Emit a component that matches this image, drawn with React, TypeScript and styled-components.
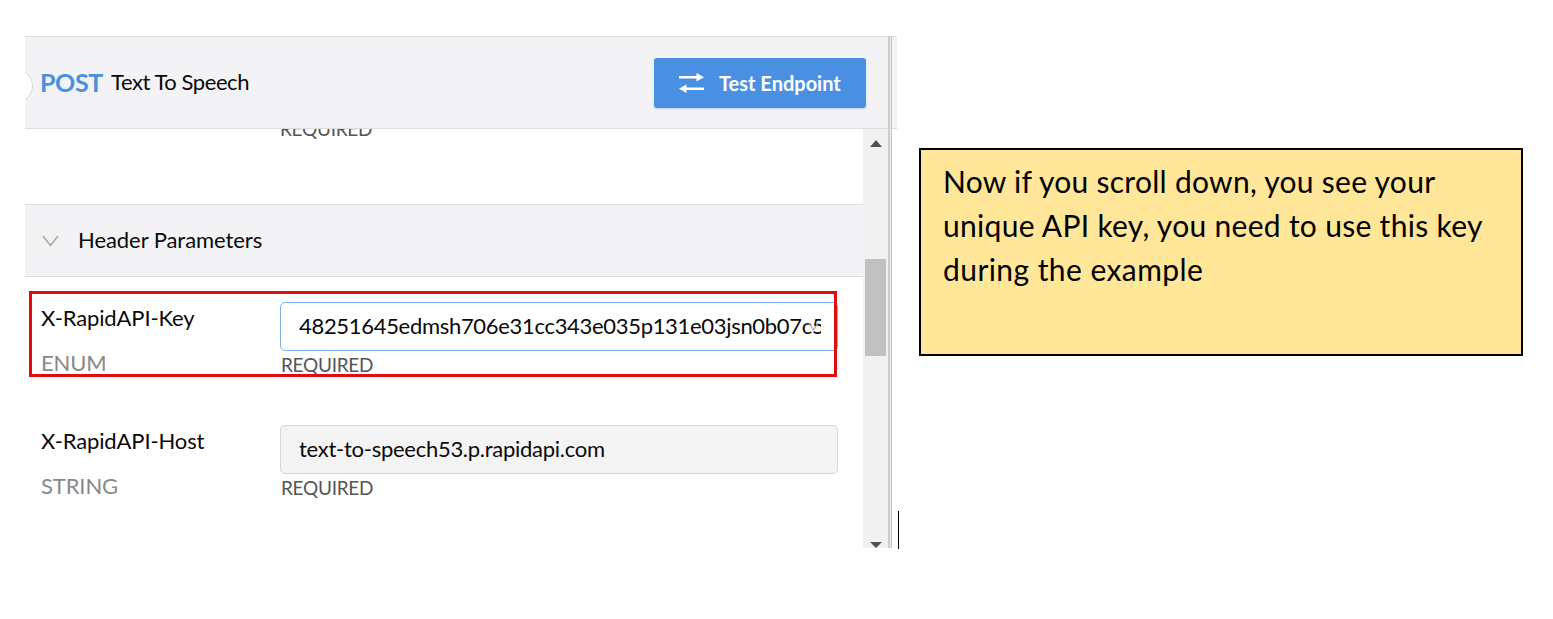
import React from "react";
import styled, { createGlobalStyle } from "styled-components";

const GlobalStyle = createGlobalStyle`
  * { box-sizing: border-box; }
  body { margin: 0; background: #fff; font-family: Lato, "Liberation Sans", sans-serif; color: #0a0a0a; }
`;

const Page = styled.main`
  display: flex;
  align-items: flex-start;
  width: 1553px;
  height: 619px;
  padding: 36px 0 0 25px;
  overflow: hidden;
`;

const Panel = styled.section`
  display: flex;
  flex-direction: column;
  width: 863px;
  height: 512px;
`;

const Header = styled.header`
  display: flex;
  align-items: center;
  height: 93px;
  flex: none;
  padding-right: 22px;
  background: #f3f3f5;
  border-top: 1px solid #dcdddf;
  border-bottom: 1px solid #dcdddf;
`;

const HandleClip = styled.div`
  width: 15px;
  height: 40px;
  margin-top: 7px;
  overflow: hidden;
`;

const Handle = styled.div`
  width: 34px;
  height: 34px;
  margin: 3px 0 0 -26px;
  border: 1px solid #d8d8da;
  border-radius: 50%;
  background: #fff;
`;

const Method = styled.span`
  width: 71px;
  padding-bottom: 2px;
  font-size: 25px;
  font-weight: 700;
  line-height: 30px;
  letter-spacing: -0.4px;
  color: #4a90e2;
`;

const Title = styled.h1`
  flex: 1;
  margin: 0;
  padding-bottom: 2px;
  font-size: 22px;
  font-weight: 400;
  line-height: 30px;
  letter-spacing: -0.43px;
`;

const TestButton = styled.button`
  display: flex;
  align-items: center;
  width: 212px;
  height: 50px;
  padding: 0 0 0 24px;
  gap: 14px;
  border: 0;
  border-radius: 3px;
  background: #4a90e2;
  box-shadow: 0 1px 2px rgba(74, 144, 226, 0.35);
  color: #fff;
  font: 700 20px Lato, sans-serif;
  white-space: nowrap;
`;

const Body = styled.div`
  display: flex;
  flex: 1;
  min-height: 0;
`;

const Content = styled.div`
  position: relative;
  width: 838px;
  overflow: hidden;
`;

const Hint = styled.div`
  padding-left: 1px;
  font-size: 19px;
  line-height: 28px;
  letter-spacing: -0.28px;
  color: #555;
`;

const PreviousParam = styled.div`
  height: 75px;
  padding-left: 254px;
  overflow: hidden;

  ${Hint} {
    margin-top: -14px;
  }
`;

const SectionBar = styled.div`
  display: flex;
  align-items: center;
  height: 73px;
  padding: 0 0 3px 17px;
  gap: 20px;
  background: #f3f3f5;
  border-top: 1px solid #dcdddf;
  border-bottom: 1px solid #dcdddf;
  font-size: 22px;
  letter-spacing: -0.06px;
`;

const SectionChevron = styled.svg`
  margin: 3px -1px 0 0;
`;

const Param = styled.div`
  display: flex;
  height: 123px;
  padding: 25px 0 0 16px;
`;

const Labels = styled.div`
  width: 239px;
`;

const Name = styled.div`
  margin-top: -1px;
  font-size: 22px;
  line-height: 34px;
  letter-spacing: -0.12px;
`;

const Kind = styled.div`
  margin-top: 11px;
  font-size: 22px;
  line-height: 34px;
  letter-spacing: -0.12px;
  color: #888;
`;

const Field = styled.div<{ $active?: boolean }>`
  display: flex;
  align-items: center;
  width: 558px;
  height: 49px;
  padding: 0 16px 2px 18px;
  border: 1px solid ${(p) => (p.$active ? "#7fb0e8" : "#d6d6d6")};
  border-radius: 5px;
  background: ${(p) => (p.$active ? "#fff" : "#f4f4f4")};
  font-size: 22px;
  letter-spacing: ${(p) => (p.$active ? "-0.31px" : "-0.27px")};
`;

const Value = styled.div`
  flex: 1;
  overflow: hidden;
  white-space: nowrap;
`;

const FieldChevron = styled.svg`
  flex: none;
  margin: 4px 0 0 -15px;
`;

const Highlight = styled.div`
  position: absolute;
  left: 4px;
  top: 162px;
  width: 808px;
  height: 86px;
  border: 3px solid #e30b0b;
`;

const Scrollbar = styled.div`
  display: flex;
  flex-direction: column;
  align-items: center;
  width: 25px;
  background: #f1f1f1;
`;

const ScrollArrow = styled.svg<{ $top?: number }>`
  flex: none;
  margin-top: ${(p) => p.$top ?? 0}px;
`;

const Thumb = styled.div`
  width: 21px;
  height: 97px;
  margin-top: 112px;
  margin-bottom: auto;
  background: #c1c1c1;
`;

const Divider = styled.div`
  width: 4px;
  height: 512px;
  background: #ececec;
  border-left: 2px solid #cdcdcd;
  border-right: 1px solid #c4c4c4;
`;

const NextHeader = styled.div`
  width: 5px;
  height: 93px;
  background: #f3f3f5;
  border-top: 1px solid #dcdddf;
  border-bottom: 1px solid #dcdddf;
`;

const Caret = styled.div`
  width: 1px;
  height: 38px;
  margin: 475px 0 0 1px;
  background: #000;
`;

const Note = styled.aside`
  width: 604px;
  height: 208px;
  margin: 112px 0 0 20px;
  padding: 9px 0 0 22px;
  border: 2px solid #000;
  background: #ffe699;
  color: #000;
  font-size: 30px;
  line-height: 44px;
  white-space: nowrap;
`;

const Line = styled.div<{ $spacing: number }>`
  letter-spacing: ${(p) => p.$spacing}px;
`;

export default function App() {
  return (
    <>
      <GlobalStyle />
      <Page>
        <Panel>
          <Header>
            <HandleClip>
              <Handle />
            </HandleClip>
            <Method>POST</Method>
            <Title>Text To Speech</Title>
            <TestButton>
              <svg width="27" height="22" viewBox="0 0 27 22" fill="#fff">
                <path d="M1 3.900h17.500V1L26 5.200l-7.500 4.200V6.500H1z" />
                <path d="M26 15.500H8.500v-2.900L1 16.800l7.500 4.200v-2.900H26z" />
              </svg>
              Test Endpoint
            </TestButton>
          </Header>
          <Body>
            <Content>
              <PreviousParam>
                <Hint>REQUIRED</Hint>
              </PreviousParam>
              <SectionBar>
                <SectionChevron width="17" height="12" viewBox="0 0 17 12" fill="none" stroke="#aaa" strokeWidth="1.6">
                  <path d="M1 1l7.500 9.500L16 1" />
                </SectionChevron>
                Header Parameters
              </SectionBar>
              <Param>
                <Labels>
                  <Name>X-RapidAPI-Key</Name>
                  <Kind>ENUM</Kind>
                </Labels>
                <div>
                  <Field $active>
                    <Value>48251645edmsh706e31cc343e035p131e03jsn0b07c5</Value>
                    <FieldChevron width="15" height="11" viewBox="0 0 15 11" fill="none" stroke="#aaa" strokeWidth="1.3">
                      <path d="M3 1l4.500 7L12 1" />
                    </FieldChevron>
                  </Field>
                  <Hint>REQUIRED</Hint>
                </div>
              </Param>
              <Param>
                <Labels>
                  <Name>X-RapidAPI-Host</Name>
                  <Kind>STRING</Kind>
                </Labels>
                <div>
                  <Field>
                    <Value>text-to-speech53.p.rapidapi.com</Value>
                  </Field>
                  <Hint>REQUIRED</Hint>
                </div>
              </Param>
              <Highlight />
            </Content>
            <Scrollbar>
              <ScrollArrow $top={11} width="12" height="7" viewBox="0 0 12 7">
                <path d="M0 7L6 0l6 7z" fill="#505050" />
              </ScrollArrow>
              <Thumb />
              <ScrollArrow width="12" height="6" viewBox="0 0 12 6">
                <path d="M0 0h12L6 6z" fill="#505050" />
              </ScrollArrow>
            </Scrollbar>
          </Body>
        </Panel>
        <Divider />
        <NextHeader />
        <Caret />
        <Note>
          <Line $spacing={0.28}>Now if you scroll down, you see your</Line>
          <Line $spacing={0.3}>unique API key, you need to use this key</Line>
          <Line $spacing={0.43}>during the example</Line>
        </Note>
      </Page>
    </>
  );
}
